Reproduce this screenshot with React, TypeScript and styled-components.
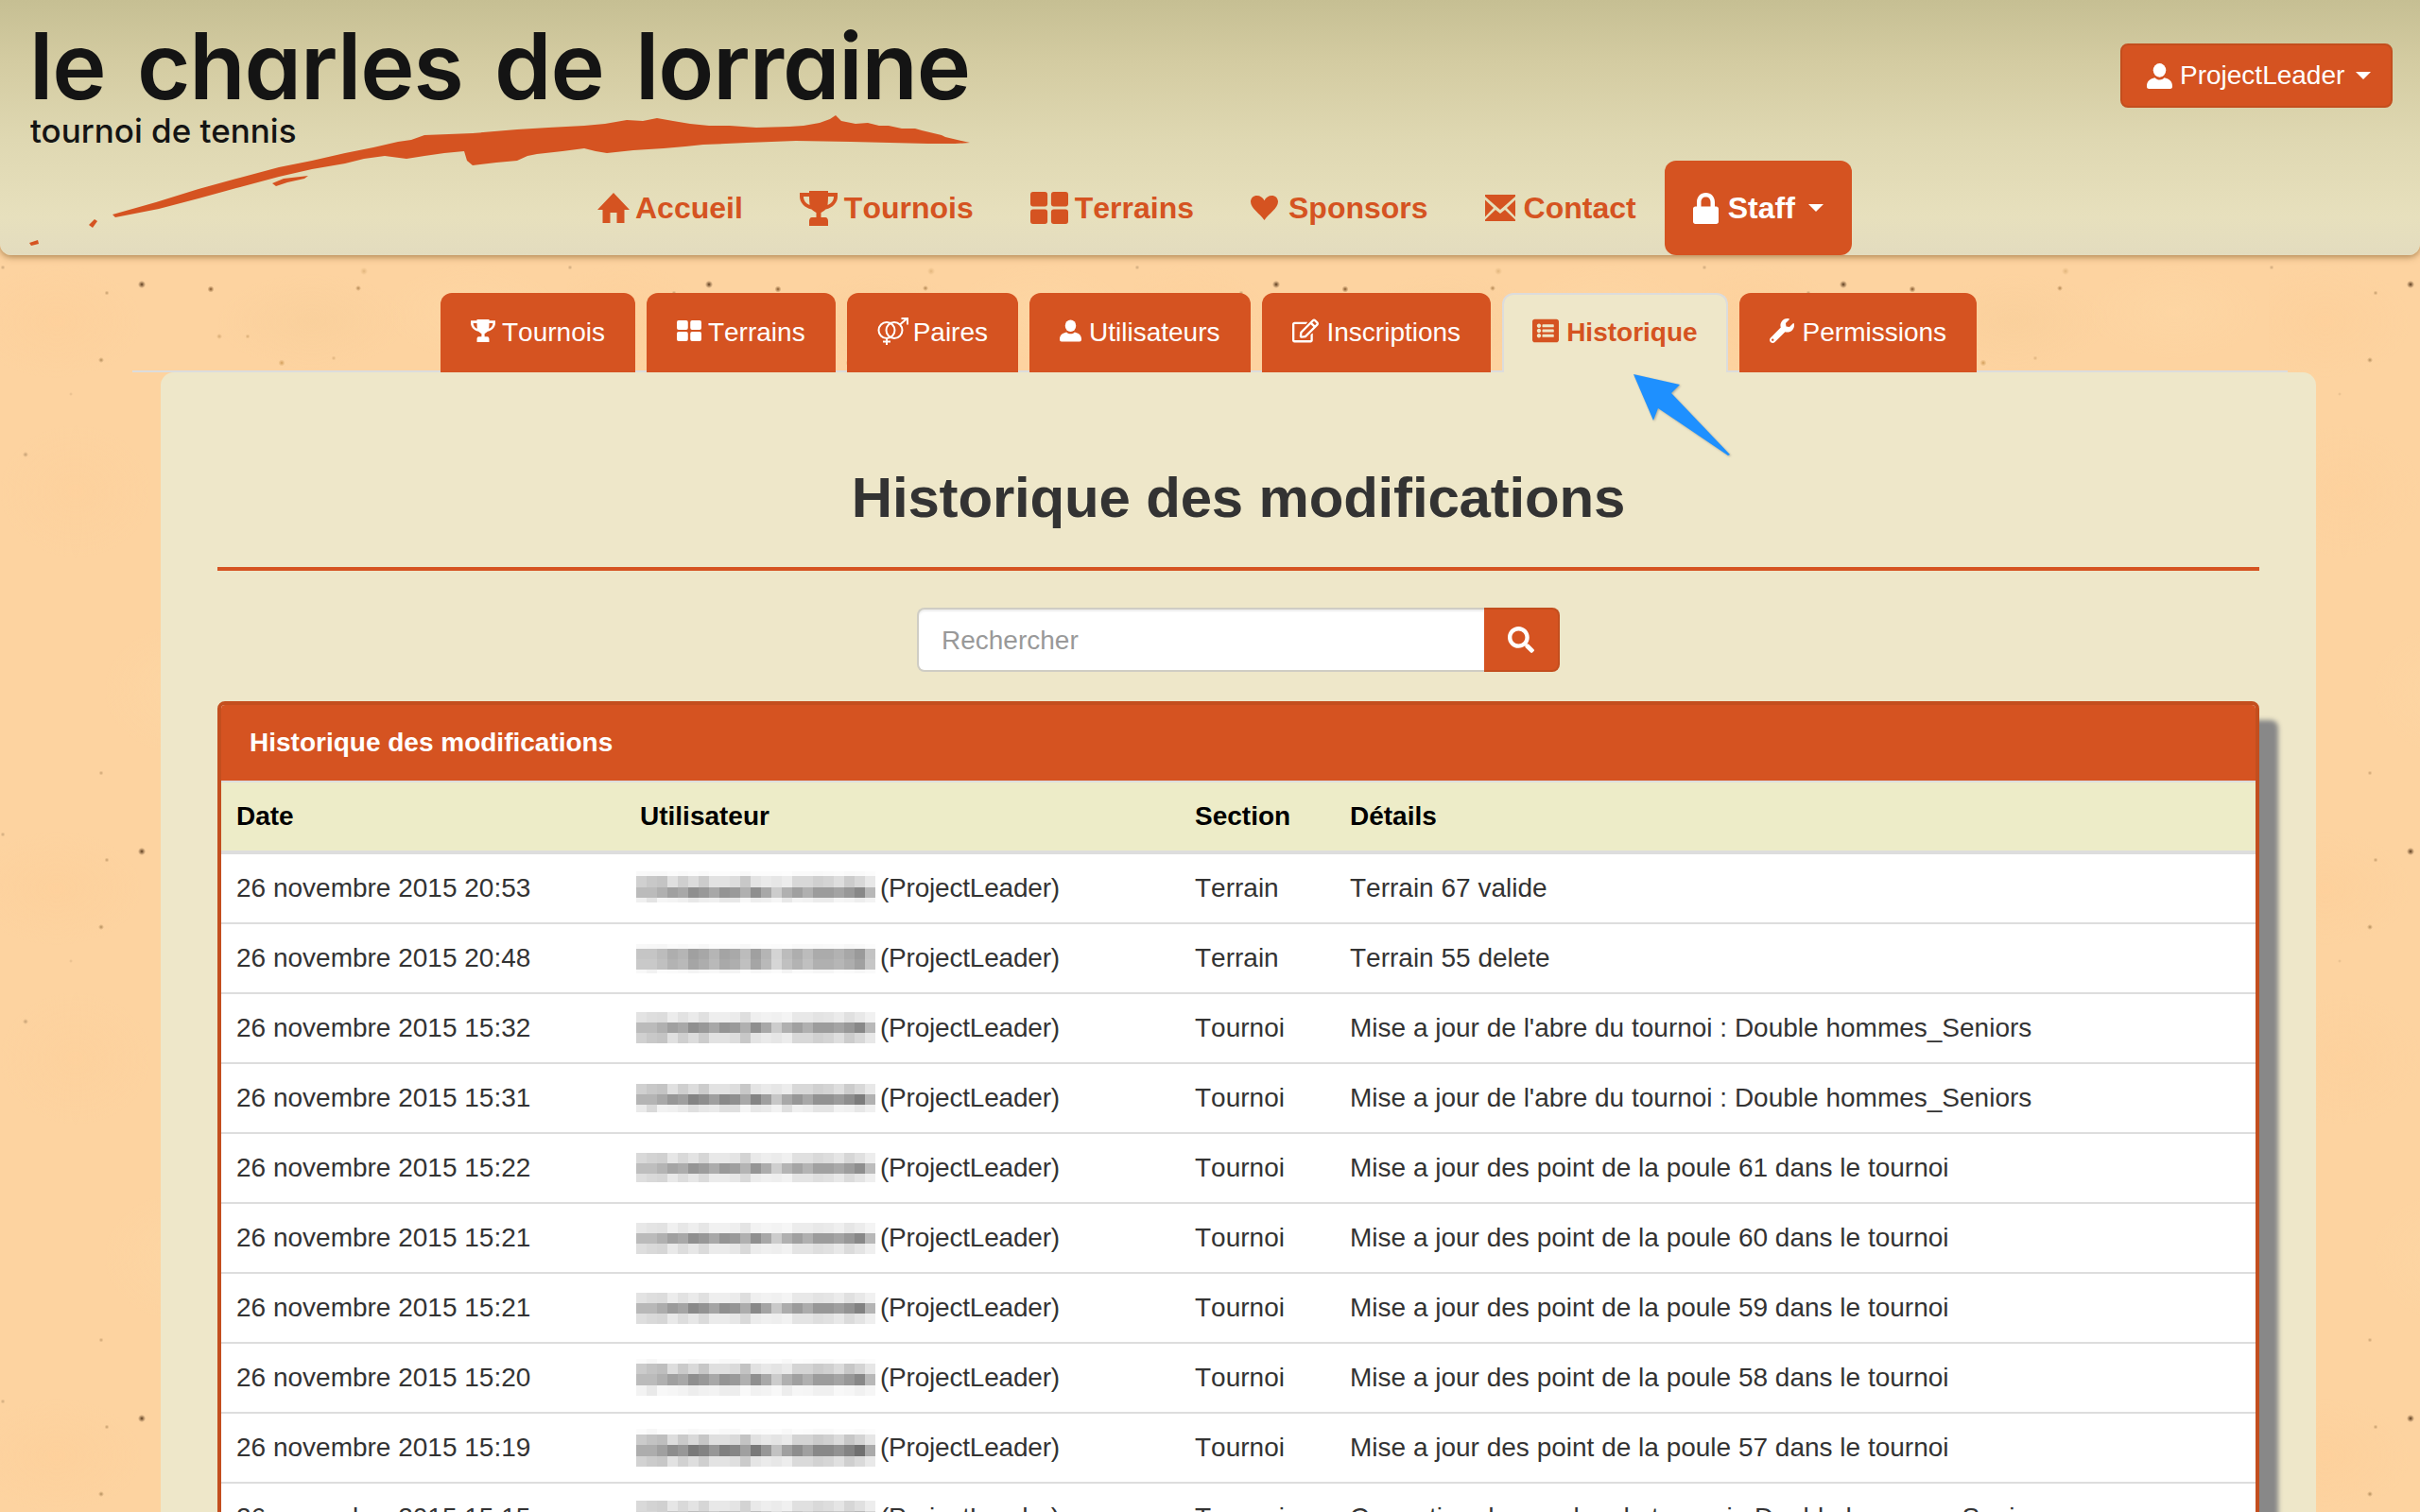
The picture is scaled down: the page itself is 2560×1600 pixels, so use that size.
import React from "react";
import styled, { createGlobalStyle } from "styled-components";
import { FaRegEdit, FaWrench, FaSearch, FaListAlt } from "react-icons/fa";

const ORANGE = "#d55321";
const ORANGE_DARK = "#c34e1e";

const speck = (x: number, y: number, r: number, c: string) =>
  `radial-gradient(circle ${r}px at ${x}px ${y}px, ${c} 0%, ${c}88 40%, transparent 100%)`;
const blotch = (x: number, y: number, rx: number, ry: number, c: string) =>
  `radial-gradient(ellipse ${rx}px ${ry}px at ${x}px ${y}px, ${c} 0%, transparent 100%)`;

const paper = [
  speck(150, 301, 4, "#54351a"),
  speck(223, 306, 3.5, "#7c5228"),
  speck(113, 310, 2.5, "#c09868"),
  speck(379, 305, 3, "#b08450"),
  speck(385, 287, 4, "#e0b47c"),
  speck(107, 381, 3, "#b08a58"),
  speck(232, 356, 3, "#d4a870"),
  speck(262, 356, 2.5, "#d4a870"),
  speck(298, 384, 3.5, "#d09c58"),
  speck(353, 379, 2.5, "#dcb07c"),
  speck(27, 481, 3, "#c09c70"),
  speck(75, 417, 2, "#e0b888"),
  speck(3, 283, 2.5, "#c8a478"),
  speck(107, 218, 2.5, "#c8a070"),
  blotch(60, 340, 90, 60, "rgba(255,203,146,.28)"),
  blotch(200, 130, 90, 70, "rgba(255,220,170,.3)"),
  blotch(330, 340, 100, 50, "rgba(242,200,145,.25)"),
  blotch(80, 520, 80, 70, "rgba(255,205,150,.28)"),
  blotch(500, 330, 90, 50, "rgba(255,220,170,.28)"),
  blotch(520, 120, 90, 70, "rgba(255,203,150,.22)"),
].join(",");

const GlobalStyle = createGlobalStyle`
  html, body { margin: 0; height: 1600px; overflow: hidden; }
  body {
    font-family: "Liberation Sans", Arial, sans-serif;
    font-size: 28px;
    line-height: 40px;
    font-kerning: none;
    color: #333;
    background-color: #fdd3a0;
    background-image: ${paper};
    background-size: 600px 600px;
  }
`;

const Page = styled.div`
  position: relative;
  width: 2560px;
  height: 1600px;
  overflow: hidden;
`;

const Header = styled.header`
  display: grid;
  height: 270px;
  background: linear-gradient(180deg, #c6bf93 0%, #d4cca2 25%, #dfd8b2 55%, #e7e0bd 85%, #e3dcbf 100%);
  border-radius: 0 0 12px 12px;
  box-shadow: 0 2px 7px rgba(130, 90, 40, 0.65);
`;

const Logo = styled.div`
  grid-area: 1 / 1;
  display: flex;
  flex-direction: column;
  position: relative;
`;

const LogoTitle = styled.div`
  font-family: Inter, "Liberation Sans", sans-serif;
  font-weight: 600;
  font-size: 97px;
  line-height: 92px;
  letter-spacing: -1.1px;
  word-spacing: 10px;
  color: #141414;
  margin: 24px 0 0 31px;
  white-space: nowrap;
  font-kerning: normal;
  font-feature-settings: "cv11" 1;
`;

const LogoSub = styled.div`
  font-family: Inter, "Liberation Sans", sans-serif;
  font-weight: 500;
  font-size: 35px;
  line-height: 40px;
  color: #141414;
  margin: 2px 0 0 32px;
  white-space: nowrap;
  font-kerning: normal;
  font-feature-settings: "cv11" 1;
`;

const Swoosh = styled.svg`
  position: absolute;
  left: 0;
  top: 0;
`;

const Nav = styled.nav`
  grid-area: 1 / 1;
  align-self: end;
  justify-self: start;
  margin-left: 602px;
  display: flex;
  position: relative;
`;

const NavItem = styled.a<{ $active?: boolean; $gap: number }>`
  display: flex;
  align-items: center;
  gap: ${(p) => p.$gap}px;
  height: 100px;
  padding: 0 30px;
  font-weight: 700;
  font-size: 32px;
  color: ${(p) => (p.$active ? "#fff" : ORANGE)};
  background: ${(p) => (p.$active ? ORANGE : "transparent")};
  border-radius: ${(p) => (p.$active ? "12px" : "0")};
`;

const Caret = styled.span`
  display: inline-block;
  width: 0;
  height: 0;
  margin-left: 4px;
  border-left: 8px solid transparent;
  border-right: 8px solid transparent;
  border-top: 8px solid #fff;
`;

const UserButton = styled.button`
  grid-area: 1 / 1;
  justify-self: end;
  align-self: start;
  position: relative;
  margin: 46px 29px 0 0;
  width: 288px;
  height: 68px;
  display: flex;
  align-items: center;
  padding: 0 0 0 26px;
  gap: 8px;
  font: 28px/40px "Liberation Sans", Arial, sans-serif;
  color: #fff;
  background: ${ORANGE};
  border: 2px solid ${ORANGE_DARK};
  border-radius: 8px;
`;

const Container = styled.main`
  padding: 40px 140px 0;
`;

const TabBar = styled.ul`
  list-style: none;
  margin: 0;
  padding: 0 0 0 326px;
  height: 84px;
  display: flex;
  gap: 12px;
  border-bottom: 2px solid #dcdcdc;
  box-sizing: border-box;
`;

const Tab = styled.li<{ $active?: boolean }>`
  height: 84px;
  box-sizing: border-box;
  display: flex;
  align-items: flex-start;
  padding: ${(p) => (p.$active ? "20px 30px 0" : "22px 32px 0")};
  border-radius: 12px 12px 0 0;
  color: ${(p) => (p.$active ? ORANGE : "#fff")};
  font-weight: ${(p) => (p.$active ? 700 : 400)};
  background: ${(p) => (p.$active ? "#eee7c9" : ORANGE)};
  border: ${(p) => (p.$active ? "2px solid #dcdcdc" : "0")};
  border-bottom: 0;
  position: relative;
  z-index: 1;
  white-space: nowrap;
`;

const TabIcon = styled.span<{ $slot: number }>`
  width: ${(p) => p.$slot}px;
  height: 36px;
  flex: none;
  display: flex;
  align-items: center;
`;

const Panel = styled.section`
  margin: 0 -30px 0 30px;
  padding: 100px 60px 0;
  background: #eee7c9;
  border-radius: 14px 14px 0 0;
`;

const Title = styled.h1`
  margin: 0;
  text-align: center;
  font-size: 60px;
  line-height: 66px;
  font-weight: 700;
  letter-spacing: -0.18px;
  color: #333;
`;

const Rule = styled.hr`
  margin: 40px 0 39px;
  border: 0;
  height: 4px;
  background: ${ORANGE};
`;

const Search = styled.form`
  display: flex;
  width: 680px;
  height: 68px;
  margin: 0 auto 31px;
`;

const SearchInput = styled.input`
  flex: 1;
  min-width: 0;
  box-sizing: border-box;
  padding: 2px 24px 0;
  font: 28px "Liberation Sans", Arial, sans-serif;
  font-kerning: none;
  color: #333;
  background: #fff;
  border: 2px solid #cfcdc4;
  border-right: 0;
  border-radius: 8px 0 0 8px;
  box-shadow: inset 0 2px 2px rgba(0, 0, 0, 0.07);
  outline: 0;
  &::placeholder { color: #999; opacity: 1; }
`;

const SearchButton = styled.button`
  width: 80px;
  flex: none;
  display: flex;
  align-items: center;
  justify-content: center;
  padding: 0;
  background: ${ORANGE};
  border: 2px solid ${ORANGE_DARK};
  border-left: 0;
  border-radius: 0 8px 8px 0;
  color: #fff;
`;

const Card = styled.div`
  border: 4px solid ${ORANGE_DARK};
  border-radius: 8px;
  box-shadow: 20px 20px 5px #888;
  background: #fff;
`;

const CardHeading = styled.div`
  height: 80px;
  padding-left: 30px;
  display: flex;
  align-items: center;
  font-weight: 700;
  color: #fff;
  background: ${ORANGE};
  border-radius: 4px 4px 0 0;
  border-bottom: 2px solid #ddd;
`;

const Table = styled.table`
  width: 100%;
  table-layout: fixed;
  border-collapse: separate;
  border-spacing: 0;
`;

const Th = styled.th`
  text-align: left;
  padding: 16px;
  font-weight: 700;
  color: #000;
  background: #edecc8;
  border-bottom: 4px solid #ddd;
`;

const Td = styled.td`
  padding: 16px;
  border-bottom: 2px solid #ddd;
  color: #333;
  white-space: nowrap;
`;

const Role = styled.span`
  letter-spacing: -0.2px;
`;

const Mosaic = styled.svg`
  display: inline-block;
  vertical-align: top;
  margin: 0 5px 0 -4px;
`;

const Arrow = styled.svg`
  position: absolute;
  left: 1720px;
  top: 390px;
  filter: drop-shadow(1px 1px 1px rgba(60, 60, 60, 0.35));
  z-index: 2;
`;

const HomeIcon = () => (
  <svg width="34" height="32" viewBox="0 0 34 32" fill="currentColor">
    <path d="M17 0L34 18H28.5V32H20.5V21H13.5V32H5.5V18H0Z" />
  </svg>
);
const TrophyIcon = ({ w, h }: { w: number; h: number }) => (
  <svg width={w} height={h} viewBox="0 0 40 37" fill="currentColor">
    <path
      fillRule="evenodd"
      d="M10 0H30V2H40V6C40 12 35 18 27.5 19.5 25.5 21.5 23.5 22.5 22.5 23V28H27C29 28 30 30 30 32V37H10V32C10 30 11 28 13 28H17.5V23C16.5 22.5 14.5 21.5 12.5 19.5 5 18 0 12 0 6V2H10ZM4 6C4 10 6.5 13.5 10.5 15 10.2 12 10 9 10 6ZM36 6H30C30 9 29.8 12 29.5 15 33.5 13.5 36 10 36 6Z"
    />
  </svg>
);
const GridIcon = ({ w, h }: { w: number; h: number }) => (
  <svg width={w} height={h} viewBox="0 0 42 34" fill="currentColor" preserveAspectRatio="none">
    <rect x="0" y="0" width="19" height="15.5" rx="3" />
    <rect x="23" y="0" width="19" height="15.5" rx="3" />
    <rect x="0" y="18.5" width="19" height="15.5" rx="3" />
    <rect x="23" y="18.5" width="19" height="15.5" rx="3" />
  </svg>
);
const HeartIcon = () => (
  <svg width="29" height="26" viewBox="0 0 29 26" fill="currentColor">
    <path d="M14.5 26C10 19.5 0 13.5 0 6.6 0 2.7 2.9 0 6.6 0 10 0 13 2 14.5 5.2 16 2 19 0 22.4 0 26.1 0 29 2.7 29 6.6 29 13.5 19 19.5 14.5 26Z" />
  </svg>
);
const MailIcon = () => (
  <svg width="32" height="28" viewBox="0 0 32 28" fill="currentColor">
    <path d="M0 0H32V2L16 16 0 2Z" />
    <path d="M0 5.5L9 14 0 23.5Z" />
    <path d="M32 5.5L23 14 32 23.5Z" />
    <path d="M0 28V26.5L11 16 16 20 21 16 32 26.5V28Z" />
  </svg>
);
const LockIcon = () => (
  <svg width="27" height="33" viewBox="0 0 27 33" fill="currentColor">
    <path
      fillRule="evenodd"
      d="M0 17C0 15.5 1 14.5 2.5 14.5H4V10C4 4 8 0 13.5 0S23 4 23 10V14.5H24.5C26 14.5 27 15.5 27 17V30.5C27 32 26 33 24.5 33H2.5C1 33 0 32 0 30.5ZM8.5 14.5H18.5V10C18.5 6.5 16.5 4.5 13.5 4.5S8.5 6.5 8.5 10Z"
    />
  </svg>
);
const UserIcon = ({ w, h }: { w: number; h: number }) => (
  <svg width={w} height={h} viewBox="0 0 24 24" fill="currentColor">
    <ellipse cx="12" cy="6.5" rx="6" ry="6.5" />
    <path d="M0 21C0 16.5 3.5 14.5 7.5 13.5 9 15 10.5 15.5 12 15.5S15 15 16.5 13.5C20.5 14.5 24 16.5 24 21V22C24 23.2 23 24 22 24H2C1 24 0 23.2 0 22Z" />
  </svg>
);
const PairIcon = () => (
  <svg width="33" height="29" viewBox="0 0 33 29" fill="none" stroke="currentColor" strokeWidth="2">
    <circle cx="10" cy="13.5" r="8.5" />
    <circle cx="18" cy="13.5" r="8.5" />
    <path d="M24 7.5L31.5 1M25.5 1H32V7.5M10 22V29M6 25.5H14" />
  </svg>
);

const TOP = [0xd0,0xc8,0xc4,0xe0,0xcf,0xdc,0xcc,0xe2,0xe2,0xdd,0xc8,0xe4,0xea,0xe6,0xec,0xd8,0xd8,0xd0,0xd4,0xde,0xcc,0xd8,0xe8];
const MID = [0xbb,0xbb,0xb0,0xa0,0xa8,0x8f,0x98,0xa8,0x94,0x9a,0xb0,0x8f,0xa8,0xcc,0xb0,0xa0,0xb0,0x9c,0x9c,0xa4,0x98,0x88,0xb8];
const BOT = [0xf0,0xe4,0xf6,0xf4,0xf0,0xe8,0xee,0xf0,0xe8,0xe8,0xf8,0xee,0xf0,0xf6,0xe8,0xf4,0xf2,0xec,0xec,0xf6,0xf4,0xee,0xf4];

type Strip = [number, number[], number];
const shade = (v: number, k: number) => {
  const g = Math.max(0, Math.min(255, Math.round(255 - (255 - v) * k)));
  return `rgb(${g},${g},${g})`;
};

const Blur = ({ offset, strips }: { offset: number; strips: Strip[] }) => {
  let y = offset;
  const rects: React.ReactNode[] = [];
  strips.forEach(([h, profile, k], r) => {
    profile.forEach((v, c) => {
      rects.push(<rect key={`${r}-${c}`} x={c * 11} y={y} width="11" height={h} fill={shade(v, k)} />);
    });
    y += h;
  });
  return (
    <Mosaic width="253" height="40" viewBox="0 0 253 40" shapeRendering="crispEdges">
      {rects}
    </Mosaic>
  );
};

const rows: { date: string; section: string; detail: string; offset: number; strips: Strip[] }[] = [
  { date: "26 novembre 2015 20:53", section: "Terrain", detail: "Terrain 67 valide", offset: 2, strips: [[5, TOP, 0.12], [12, TOP, 1], [11, MID, 1], [5, BOT, 1]] },
  { date: "26 novembre 2015 20:48", section: "Terrain", detail: "Terrain 55 delete", offset: 5, strips: [[5, TOP, 0.15], [11, MID, 0.85], [11, MID, 0.8], [4, BOT, 0.5]] },
  { date: "26 novembre 2015 15:32", section: "Tournoi", detail: "Mise a jour de l'abre du tournoi : Double hommes_Seniors", offset: 3, strips: [[11, TOP, 0.6], [11, MID, 1], [11, TOP, 1]] },
  { date: "26 novembre 2015 15:31", section: "Tournoi", detail: "Mise a jour de l'abre du tournoi : Double hommes_Seniors", offset: 5, strips: [[11, TOP, 1], [11, MID, 1.1], [8, BOT, 1.4]] },
  { date: "26 novembre 2015 15:22", section: "Tournoi", detail: "Mise a jour des point de la poule 61 dans le tournoi", offset: 4, strips: [[11, TOP, 0.8], [11, MID, 0.95], [9, TOP, 0.7]] },
  { date: "26 novembre 2015 15:21", section: "Tournoi", detail: "Mise a jour des point de la poule 60 dans le tournoi", offset: 4, strips: [[11, TOP, 0.5], [11, MID, 1], [11, TOP, 0.7]] },
  { date: "26 novembre 2015 15:21", section: "Tournoi", detail: "Mise a jour des point de la poule 59 dans le tournoi", offset: 4, strips: [[11, TOP, 0.6], [11, MID, 1.05], [11, TOP, 0.7]] },
  { date: "26 novembre 2015 15:20", section: "Tournoi", detail: "Mise a jour des point de la poule 58 dans le tournoi", offset: 0, strips: [[5, BOT, 0.3], [11, TOP, 1.1], [12, MID, 1], [11, BOT, 0.8]] },
  { date: "26 novembre 2015 15:19", section: "Tournoi", detail: "Mise a jour des point de la poule 57 dans le tournoi", offset: 0, strips: [[6, BOT, 0.3], [11, TOP, 1.1], [12, MID, 1.2], [11, TOP, 0.95]] },
  { date: "26 novembre 2015 15:15", section: "Tournoi", detail: "Correction des poules du tournoi : Double hommes_Seniors", offset: 2, strips: [[11, TOP, 0.8], [11, MID, 0.6], [11, TOP, 0.7]] },
];

const tabs = [
  { label: "Tournois", slot: 33, icon: <TrophyIcon w={26} h={24} /> },
  { label: "Terrains", slot: 33, icon: <GridIcon w={26} h={22} /> },
  { label: "Paires", slot: 38, icon: <PairIcon /> },
  { label: "Utilisateurs", slot: 31, icon: <UserIcon w={23} h={24} /> },
  { label: "Inscriptions", slot: 37, icon: <FaRegEdit size={28} /> },
  { label: "Historique", slot: 36, icon: <FaListAlt size={28} />, active: true },
  { label: "Permissions", slot: 35, icon: <FaWrench size={26} /> },
];

export default function App() {
  return (
    <Page>
      <GlobalStyle />
      <Header>
        <Logo>
          <LogoTitle>le charles de lorraine</LogoTitle>
          <LogoSub>tournoi de tennis</LogoSub>
          <Swoosh width="1040" height="270" viewBox="0 0 1040 270" fill={ORANGE}>
            <path d="M1026 151L1000 145 996 143 975 138 968 136 954 136 940 133 930 133 918 130 905 131 890 128 884 122 878 126 867 130 850 133 835 134 800 135 772 133 750 133 730 131 712 128 695 125 680 128 663 127 640 131 618 133 580 135 547 137 500 141 449 143 435 148 421 150 395 156 365 162 330 170 295 177 250 189 210 200 165 214 119 227 122 230 168 221 210 210 250 199 295 187 330 179 365 173 385 168 407 165 430 168 449 165 470 162 491 160 494 170 500 175 525 172 547 170 558 165 568 163 595 160 618 157 630 160 642 162 670 159 702 157 725 155 744 153 790 151 842 149 900 150 982 152 1010 152Z" />
            <path d="M288 194L300 189 326 186 322 189 304 193 292 197Z" />
            <path d="M94 238L100 232 103 234 98 241Z" />
            <path d="M31 257L40 254 41 258 33 260Z" />
          </Swoosh>
        </Logo>
        <Nav>
          <NavItem $gap={6}><HomeIcon />Accueil</NavItem>
          <NavItem $gap={7}><TrophyIcon w={40} h={37} />Tournois</NavItem>
          <NavItem $gap={7}><GridIcon w={40} h={34} />Terrains</NavItem>
          <NavItem $gap={11}><HeartIcon />Sponsors</NavItem>
          <NavItem $gap={9}><MailIcon />Contact</NavItem>
          <NavItem $gap={10} $active><LockIcon />Staff<Caret /></NavItem>
        </Nav>
        <UserButton type="button">
          <UserIcon w={27} h={27} />
          ProjectLeader
          <Caret />
        </UserButton>
      </Header>
      <Container>
        <TabBar>
          {tabs.map((t) => (
            <Tab key={t.label} $active={t.active}>
              <TabIcon $slot={t.slot}>{t.icon}</TabIcon>
              {t.label}
            </Tab>
          ))}
        </TabBar>
        <Panel>
          <Title>Historique des modifications</Title>
          <Rule />
          <Search>
            <SearchInput placeholder="Rechercher" />
            <SearchButton type="button"><FaSearch size={28} /></SearchButton>
          </Search>
          <Card>
            <CardHeading>Historique des modifications</CardHeading>
            <Table>
              <colgroup>
                <col style={{ width: 427 }} />
                <col style={{ width: 587 }} />
                <col style={{ width: 164 }} />
                <col />
              </colgroup>
              <thead>
                <tr>
                  <Th>Date</Th>
                  <Th>Utilisateur</Th>
                  <Th>Section</Th>
                  <Th>Détails</Th>
                </tr>
              </thead>
              <tbody>
                {rows.map((r, i) => (
                  <tr key={i}>
                    <Td>{r.date}</Td>
                    <Td><Blur offset={r.offset} strips={r.strips} /><Role>(ProjectLeader)</Role></Td>
                    <Td>{r.section}</Td>
                    <Td>{r.detail}</Td>
                  </tr>
                ))}
              </tbody>
            </Table>
          </Card>
        </Panel>
      </Container>
      <Arrow width="120" height="100" viewBox="0 0 120 100" fill="#1e90ff">
        <polygon points="8,6 57,17 48,26 110,91 108,92 34,42 29,55" />
      </Arrow>
    </Page>
  );
}
